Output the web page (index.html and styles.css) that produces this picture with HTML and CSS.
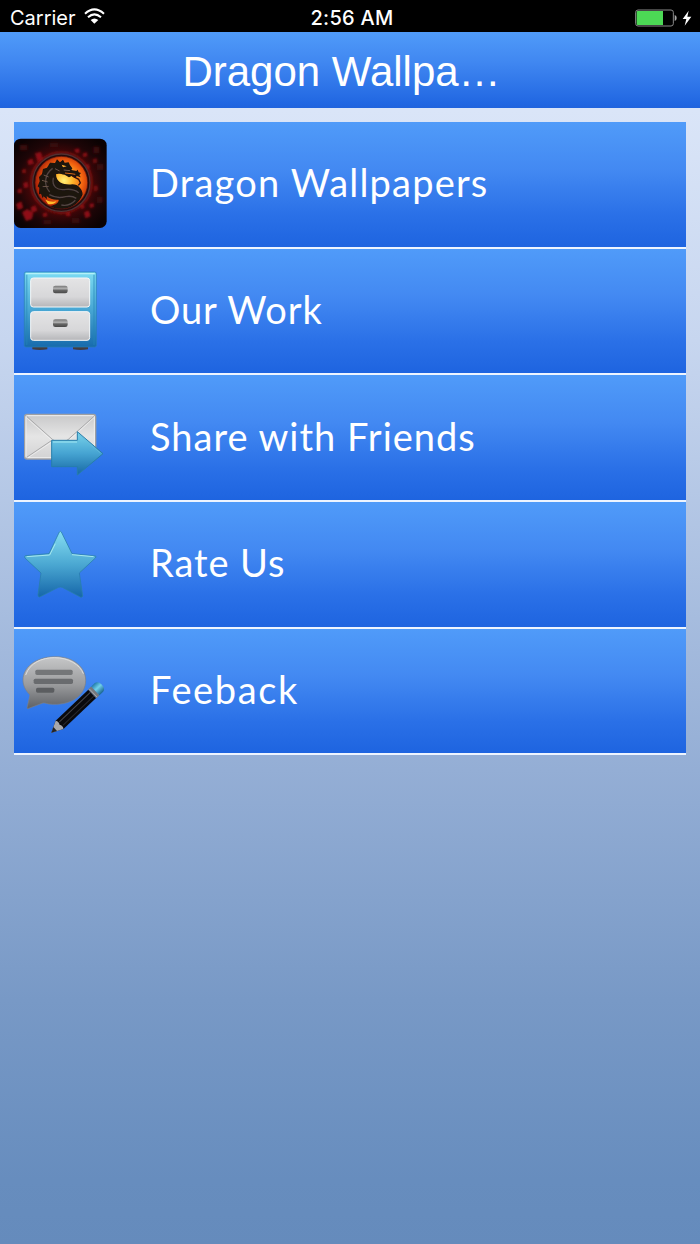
FILE: index.html
```html
<!DOCTYPE html>
<html lang="en">
<head>
    <meta charset="UTF-8">
    <meta name="viewport" content="width=device-width, initial-scale=1.0">
    <title>Dragon Wallpapers</title>
    <link rel="stylesheet" href="styles.css">
</head>
<body>
    <div class="status-bar">
        <div class="carrier">
            <span>Carrier</span>
            <svg class="wifi" viewBox="0 0 63 48">
                <path d="M3 17 Q31 -9 60 17" fill="none" stroke="#fff" stroke-width="6"/>
                <path d="M12 28 Q31 10 51 28" fill="none" stroke="#fff" stroke-width="6"/>
                <path d="M20 36 Q31 27 43 36 L31 47 Z" fill="#fff"/>
            </svg>
        </div>
        <div class="time">2:56 AM</div>
        <svg class="battery" viewBox="0 0 171 54">
            <rect x="2" y="3" width="113" height="48" rx="7" fill="none" stroke="#8b8b8b" stroke-width="3"/>
            <path d="M8 6 H84 V48 H8 Q5 48 5 45 V9 Q5 6 8 6" fill="#4cd855"/>
            <path d="M119 18 Q125 20 125 27 Q125 34 119 36 Z" fill="#aaa"/>
            <path d="M161 5 L143 30 H154 L149 50 L169 23 H157 Z" fill="#fff"/>
        </svg>
    </div>

    <header class="title-bar">
        <h1>Dragon Wallpa…</h1>
    </header>

    <ul class="menu">
        <li class="menu-item">
            <svg class="icon" viewBox="42 -9 318 375">
                <defs>
                    <radialGradient id="fire" cx="55%" cy="46%" r="56%">
                        <stop offset="0" stop-color="#fff27a"/>
                        <stop offset="0.3" stop-color="#ffb52a"/>
                        <stop offset="0.65" stop-color="#f2600f"/>
                        <stop offset="1" stop-color="#a01a06"/>
                    </radialGradient>
                    <radialGradient id="ember" cx="50%" cy="50%" r="62%">
                        <stop offset="0.5" stop-color="#4a0608"/>
                        <stop offset="0.75" stop-color="#1d0507"/>
                        <stop offset="1" stop-color="#0b0203"/>
                    </radialGradient>
                    <filter id="soft"><feGaussianBlur stdDeviation="3"/></filter>
                    <filter id="smooth"><feGaussianBlur stdDeviation="1.2"/></filter>
                </defs>
                <rect x="42" y="41" width="278" height="268" rx="20" fill="url(#ember)"/>
                <g filter="url(#soft)" fill="#8e1013">
                    <path d="M105 85l18-4 6 22-16 8zM82 108l14-8 6 16-16 4zM66 135l10-4 2 12-10 2zM70 174l12-4 4 16-14 4zM52 195l12-6 2 14-12 2z"/>
                    <path d="M48 237l16-8 6 20-16 6zM66 262l16-10 18 12-4 18-18 6zM92 247l14-6 6 16-16 6zM128 266l12-4 2 12-12 2z"/>
                    <path d="M252 262l14-6 6 18-16 6zM240 242l10-4 4 10-10 4zM268 238l12-4 2 12-12 2zM196 264l12-4 4 12-12 2zM222 74l14-4 4 12-12 2zM248 86l12-4 2 12-12 2z"/>
                    <path d="M254 120l14-4 2 14-12 4zM277 104l12-6 4 14-12 4zM280 184l12-4 2 16-12 4z" opacity=".7"/>
                </g>
                <g filter="url(#soft)" fill="#3b0a0d">
                    <path d="M60 60h22v16h-22zM150 55h24v12h-24zM280 65h18v20h-18zM290 215h18v18h-18zM215 280h24v14h-24zM130 285h24v12h-24zM290 118h20v16h-20z"/>
                </g>
                <circle cx="184" cy="173" r="91" fill="none" stroke="#9a1a14" stroke-width="4" filter="url(#soft)"/>
                <circle cx="184" cy="173" r="86" fill="#210c0c" stroke="#523032" stroke-width="4"/>
                <circle cx="184" cy="173" r="79" fill="url(#fire)" stroke="#5a120c" stroke-width="2"/>
                <g transform="translate(78 69)" filter="url(#smooth)">
                    <path d="M90 79C90 105 116 112 139 109C157 109 169 124 170 139C161 165 138 181 110 182C94 183 80 179 72 174C88 171 99 164 98 155C86 157 71 153 62 144L63 154L53 145L50 151L45 137L39 139L40 119L35 115L41 100L39 87L48 78L51 63L63 59L72 44L87 45L93 34L102 43L111 35L116 44L128 43L132 52L139 61L136 66L151 69L155 65L158 73L165 75L160 81L164 88L152 84L148 91L137 84L129 88L116 80C106 79 96 75 90 79Z" fill="#1a1211"/>
                    <path d="M139 84L158 94L163 105L157 112" fill="none" stroke="#351009" stroke-width="4"/>
                    <path d="M107 50L122 55L111 58Z" fill="#ffb02d"/>
                    <path d="M117 75L135 77L148 79" fill="none" stroke="#d96813" stroke-width="3"/>
                    <path d="M80 61C57 77 51 109 71 132M82 89C77 115 92 129 120 124Q143 122 158 134M70 140Q92 153 119 146Q137 142 151 151M106 171Q130 176 148 157" fill="none" stroke="#51443f" stroke-width="4"/>
                    <path d="M53 81l15 6M48 97l17 5M50 116l18-1M87 62l14 7M113 66l19 2" stroke="#6b5547" stroke-width="3"/>
                    <path d="M58 155Q75 164 92 160Q84 171 66 168Z" fill="#ffbd2b"/>
                </g>
            </svg>
            <span class="label dragon">Dragon Wallpapers</span>
        </li>
        <li class="menu-item">
            <svg class="icon" viewBox="42 -4 318 375">
                <defs>
                    <linearGradient id="cabinet" x1="0" y1="0" x2="0" y2="1">
                        <stop offset="0" stop-color="#7cdcf3"/>
                        <stop offset="0.5" stop-color="#48a7d4"/>
                        <stop offset="1" stop-color="#176bad"/>
                    </linearGradient>
                    <linearGradient id="drawer" x1="0" y1="0" x2="0" y2="1">
                        <stop offset="0" stop-color="#e4e4e5"/>
                        <stop offset="0.65" stop-color="#d7d7d9"/>
                        <stop offset="1" stop-color="#b5b6b9"/>
                    </linearGradient>
                    <linearGradient id="handle" x1="0" y1="0" x2="0" y2="1">
                        <stop offset="0" stop-color="#777"/>
                        <stop offset="0.4" stop-color="#b0b0b0"/>
                        <stop offset="0.6" stop-color="#666"/>
                        <stop offset="1" stop-color="#484848"/>
                    </linearGradient>
                </defs>
                <path d="M97 288h45v9q-22 4-45 0zM219 288h45v9q-22 4-45 0z" fill="#413d43"/>
                <rect x="73" y="65" width="216" height="225" rx="5" fill="url(#cabinet)" stroke="#287fae" stroke-opacity=".7" stroke-width="3"/>
                <path d="M78 70H284" stroke="#b4f1f8" stroke-width="4"/>
                <path d="M80 73V284M282 73V284" stroke="#2384b7" stroke-opacity=".45" stroke-width="5"/>
                <rect x="92" y="83" width="177" height="87" rx="8" fill="url(#drawer)" stroke="#f7f7f7" stroke-width="3"/>
                <rect x="92" y="184" width="177" height="86" rx="8" fill="url(#drawer)" stroke="#f7f7f7" stroke-width="3"/>
                <rect x="159" y="106" width="44" height="23" rx="7" fill="url(#handle)"/>
                <rect x="159" y="207" width="44" height="23" rx="7" fill="url(#handle)"/>
            </svg>
            <span class="label work">Our Work</span>
        </li>
        <li class="menu-item">
            <svg class="icon" viewBox="42 -29 318 375">
                <defs>
                    <linearGradient id="envelope" x1="0" y1="0" x2="0" y2="1">
                        <stop offset="0" stop-color="#c8c8c9"/>
                        <stop offset="0.5" stop-color="#e5e5e5"/>
                        <stop offset="1" stop-color="#d2d2d3"/>
                    </linearGradient>
                    <linearGradient id="arrow" x1="0" y1="0" x2="0" y2="1">
                        <stop offset="0" stop-color="#7bd5eb"/>
                        <stop offset="0.5" stop-color="#46a4d2"/>
                        <stop offset="1" stop-color="#1768a4"/>
                    </linearGradient>
                </defs>
                <rect x="74" y="89" width="213" height="134" rx="7" fill="url(#envelope)" stroke="#9e9fa2" stroke-width="4"/>
                <rect x="78" y="93" width="205" height="126" rx="4" fill="none" stroke="#eee" stroke-width="3"/>
                <path d="M80 95L157 164Q180 184 205 164L282 95M80 218L157 166M205 165L282 218" fill="none" stroke="#a9a9aa" stroke-width="3"/>
                <path d="M79 99L154 166M282 99L209 165M84 219L158 170" fill="none" stroke="#f5f5f5" stroke-width="2"/>
                <path d="M155 167H232V141L309 207L232 271V246H155Z" fill="url(#arrow)" stroke="#277eab" stroke-width="3"/>
                <path d="M159 172H231" stroke="#a3e8f3" stroke-width="3"/>
                <path d="M236 149L300 204" stroke="#67bddc" stroke-width="2"/>
            </svg>
            <span class="label share">Share with Friends</span>
        </li>
        <li class="menu-item">
            <svg class="icon" viewBox="42 -25 318 375">
                <defs>
                    <linearGradient id="star" x1="0" y1="0" x2="0" y2="1">
                        <stop offset="0" stop-color="#86def2"/>
                        <stop offset="0.5" stop-color="#4ba8d2"/>
                        <stop offset="1" stop-color="#1566a9"/>
                    </linearGradient>
                </defs>
                <path d="M178 65Q181 61 184 65L216 130L287 137Q289 140 286 143L238 188L248 257Q246 262 241 260L187 231Q181 229 175 231L119 260Q113 260 114 253L123 188L75 143Q72 139 76 136L147 130Z" fill="url(#star)" stroke="#287fa8" stroke-opacity=".75" stroke-width="3" stroke-linejoin="round"/>
                <path d="M80 139L149 134L166 100M216 133L281 139" fill="none" stroke="#a7e8ee" stroke-width="3"/>
            </svg>
            <span class="label rate">Rate Us</span>
        </li>
        <li class="menu-item">
            <svg class="icon" viewBox="42 -35 318 375">
                <defs>
                    <linearGradient id="bubble" x1="0" y1="0" x2="0" y2="1">
                        <stop offset="0" stop-color="#c7c8c9"/>
                        <stop offset="0.55" stop-color="#999a9c"/>
                        <stop offset="1" stop-color="#5e6065"/>
                    </linearGradient>
                    <linearGradient id="eraser" x1="0" y1="0" x2="0" y2="1">
                        <stop offset="0" stop-color="#237daa"/>
                        <stop offset="0.45" stop-color="#71d1ea"/>
                        <stop offset="1" stop-color="#18648f"/>
                    </linearGradient>
                </defs>
                <path d="M163 48C220 47 257 79 257 119C257 166 210 197 147 190C137 188 130 185 126 188L83 204Q80 202 82 198L90 163C77 150 69 135 69 118C69 80 107 49 163 48Z" fill="url(#bubble)" stroke="#7e8084" stroke-width="2"/>
                <path d="M77 103C89 67 126 51 163 51C205 51 240 72 250 99" fill="none" stroke="#dedede" stroke-width="3"/>
                <rect x="106" y="87" width="112" height="16" rx="5" fill="#747678"/>
                <rect x="101" y="114" width="118" height="16" rx="5" fill="#696b6e"/>
                <rect x="108" y="141" width="55" height="15" rx="5" fill="#5b5d60"/>
                <g transform="translate(154 276) rotate(-43.5)">
                    <path d="M0 0L34 -17H169V17H34Z" fill="#0a0a0c"/>
                    <path d="M0 0L34 -17Q40 -8 34 0Q40 9 34 17Z" fill="#a8a8ab"/>
                    <path d="M0 0L16 -8V8Z" fill="#242428"/>
                    <path d="M40 -7H168" stroke="#47474b" stroke-width="3"/>
                    <path d="M40 8H168" stroke="#29292c" stroke-width="3"/>
                    <rect x="169" y="-18" width="13" height="36" fill="#77787b"/>
                    <path d="M173 -17V17" stroke="#bcbdc0" stroke-width="2"/>
                    <path d="M182 -18H197Q209 -16 209 0Q209 16 197 18H182Z" fill="url(#eraser)"/>
                </g>
            </svg>
            <span class="label feedback">Feeback</span>
        </li>
    </ul>
</body>
</html>
```

FILE: styles.css
```css
* {
    box-sizing: border-box;
}

body {
    margin: 0;
    min-height: 1244px;
    background: linear-gradient(#dfe9fb 0, #dae5f8 110px, #c7d6ef 340px, #94aed5 770px, #7899c6 1000px, #678dbe 1180px, #658bbc 1244px);
    font-family: Lato, sans-serif;
    color: #fff;
}

.status-bar {
    display: grid;
    grid-template-columns: 1fr auto 1fr;
    align-items: center;
    height: 32px;
    padding: 4px 8px 0 10px;
    background: #000;
    font-family: Inter, sans-serif;
    font-size: 20px;
    line-height: 28px;
}

.carrier {
    display: flex;
    align-items: center;
    gap: 8px;
    letter-spacing: 0;
}

.wifi {
    width: 21px;
    height: 16px;
    margin-top: -4px;
}

.time {
    font-weight: 500;
    letter-spacing: 0.3px;
    padding-left: 2px;
}

.battery {
    width: 57px;
    height: 18px;
    justify-self: end;
    margin-top: -1px;
}

.title-bar {
    height: 76px;
    padding-right: 17px;
    background: linear-gradient(#509bf9, #4087f1 40%, #2167e2 94%, #2063dd);
    text-align: center;
}

.title-bar h1 {
    margin: 0;
    font-family: "Liberation Sans", Arial, sans-serif;
    font-size: 42px;
    font-weight: normal;
    line-height: 79px;
}

.menu {
    list-style: none;
    margin: 14px 14px 0;
    padding: 0;
}

.menu-item {
    display: flex;
    align-items: center;
    height: 126.7px;
    border-bottom: 2px solid #edf4ff;
    background: linear-gradient(#509bf9, #4389f2 38%, #2a70e7 75%, #1e64e0);
}

.icon {
    width: 106px;
    height: 125px;
    flex: none;
}

.label {
    margin-left: 30px;
    padding-bottom: 4px;
    font-size: 38px;
    line-height: 46px;
    white-space: nowrap;
}

.dragon {
    letter-spacing: 1.2px;
}

.work {
    letter-spacing: 0.9px;
}

.share {
    letter-spacing: 1px;
}

.rate {
    letter-spacing: 0.9px;
}

.feedback {
    letter-spacing: 1.6px;
}
```
